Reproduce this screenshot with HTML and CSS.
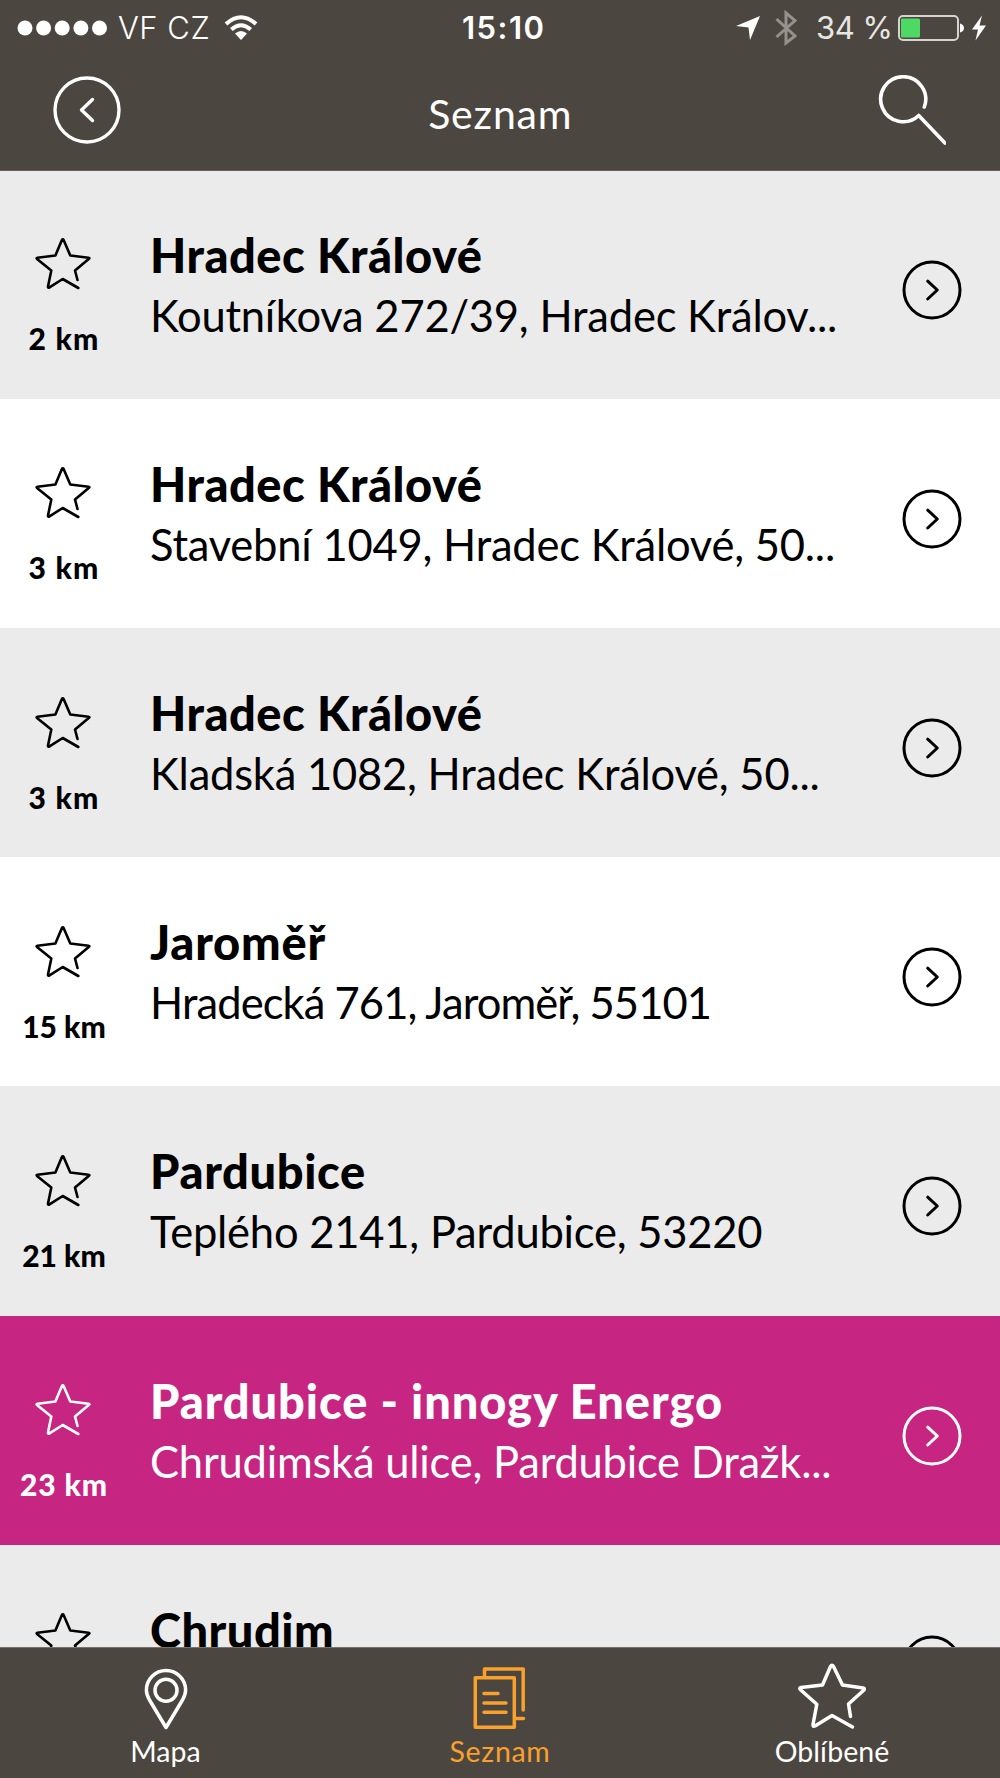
FILE: index.html
```html
<!DOCTYPE html>
<html lang="cs">
<head>
<meta charset="utf-8">
<title>Seznam</title>
<link rel="stylesheet" href="styles.css">
</head>
<body>
<svg class="defs" aria-hidden="true">
  <symbol id="star" viewBox="0 0 56 56"><path d="M42.500 44 40 34.500 54 22.700Q55 22 53.500 21.700L35.300 19.500 28.600 4Q27.700 2.500 26.900 4L20.400 19.500 2.500 21.700Q1 22 2 22.900L16.300 34.500 13 50.500Q12.900 52.500 14.500 51.400L27.700 43 43.300 52"/></symbol>
  <symbol id="go" viewBox="0 0 64 64"><circle cx="32" cy="32" r="28"/><path d="M27.700 23.200 37.300 32 27.700 41"/></symbol>
</svg>
<div class="screen">
  <header class="header">
    <div class="status">
      <svg class="dots" viewBox="0 0 92 16"><circle cx="8" cy="8" r="7.500"/><circle cx="26.600" cy="8" r="7.500"/><circle cx="45.200" cy="8" r="7.500"/><circle cx="63.900" cy="8" r="7.500"/><circle cx="82.500" cy="8" r="7.500"/></svg>
      <span class="carrier">VF CZ</span>
      <svg class="wifi" viewBox="0 0 34 26"><path class="line" d="M2 9Q17-4.500 32 9M7.300 14.500Q17 6 26.700 14.500"/><path d="M11 18.500Q17 13.500 23 18.500L17 25Z"/></svg>
      <span class="time">15:10</span>
      <svg class="arrow" viewBox="0 0 26 26"><path d="M25 1 15 25 13.500 12.500 1 11Z"/></svg>
      <svg class="bluetooth" viewBox="0 0 22 36"><path d="M1.500 9 20 26 11 33V3L20 10.500 1.500 27"/></svg>
      <span class="percent">34 %</span>
      <svg class="battery" viewBox="0 0 92 28"><rect class="shell" x="2" y="2" width="59" height="24" rx="4"/><rect class="charge" x="4" y="4.500" width="19" height="19" rx="1.500"/><path d="M63 9.500Q67 10.500 67 14T63 18.500Z"/><path d="M85 1.500 75 15.500H81L78.500 26.500 89 11.500H82.500Z"/></svg>
    </div>
    <nav class="navbar">
      <svg class="back" viewBox="0 0 70 70"><circle cx="35" cy="35" r="32"/><path d="M40.500 24.500 29.500 35 40.500 45.500"/></svg>
      <h1 class="heading">Seznam</h1>
      <svg class="search" viewBox="0 0 70 70"><path d="M48.300 32A22.500 22.500 0 1 0 42.700 40.500L69 68"/></svg>
    </nav>
  </header>

  <main class="list">
    <article class="row">
      <div class="side"><svg class="star"><use href="#star"/></svg><span class="distance near">2 km</span></div>
      <div class="info"><h2 class="name">Hradec Králové</h2><p class="address">Koutníkova 272/39, Hradec Králov...</p></div>
      <svg class="go"><use href="#go"/></svg>
    </article>
    <article class="row">
      <div class="side"><svg class="star"><use href="#star"/></svg><span class="distance near">3 km</span></div>
      <div class="info"><h2 class="name">Hradec Králové</h2><p class="address">Stavební 1049, Hradec Králové, 50...</p></div>
      <svg class="go"><use href="#go"/></svg>
    </article>
    <article class="row">
      <div class="side"><svg class="star"><use href="#star"/></svg><span class="distance near">3 km</span></div>
      <div class="info"><h2 class="name">Hradec Králové</h2><p class="address">Kladská 1082, Hradec Králové, 50...</p></div>
      <svg class="go"><use href="#go"/></svg>
    </article>
    <article class="row jaromer">
      <div class="side"><svg class="star"><use href="#star"/></svg><span class="distance">15 km</span></div>
      <div class="info"><h2 class="name">Jaroměř</h2><p class="address">Hradecká 761, Jaroměř, 55101</p></div>
      <svg class="go"><use href="#go"/></svg>
    </article>
    <article class="row pardubice">
      <div class="side"><svg class="star"><use href="#star"/></svg><span class="distance">21 km</span></div>
      <div class="info"><h2 class="name">Pardubice</h2><p class="address">Teplého 2141, Pardubice, 53220</p></div>
      <svg class="go"><use href="#go"/></svg>
    </article>
    <article class="row featured">
      <div class="side"><svg class="star"><use href="#star"/></svg><span class="distance">23 km</span></div>
      <div class="info"><h2 class="name">Pardubice - innogy Energo</h2><p class="address">Chrudimská ulice, Pardubice Dražk...</p></div>
      <svg class="go"><use href="#go"/></svg>
    </article>
    <article class="row">
      <div class="side"><svg class="star"><use href="#star"/></svg></div>
      <div class="info"><h2 class="name">Chrudim</h2></div>
      <svg class="go"><use href="#go"/></svg>
    </article>
  </main>

  <footer class="tabs">
    <a class="tab">
      <svg viewBox="0 0 70 70"><path d="M35 66.500 18.500 39Q15.400 33.500 15.400 29.200A19.600 19.600 0 0 1 54.600 29.200Q54.600 33.500 51.500 39Z"/><circle cx="35" cy="29.300" r="11"/></svg>
      <span>Mapa</span>
    </a>
    <a class="tab active">
      <svg viewBox="0 0 70 70"><path d="M10.300 16.700H49.300V66.300H10.300ZM19.500 16V8H58.200V49M50 57.500H58.500M19 32.500H33M19 42H41M19 51.300H41"/></svg>
      <span>Seznam</span>
    </a>
    <a class="tab">
      <svg viewBox="0 0 70 70"><path d="M53.500 55.500 51.500 43 67 29Q68 27.300 66 27L45.500 24 36.500 5.500Q35 3 33.500 5.500L25.500 24 4 26.500Q1.800 27 3.500 28.700L19.800 43.300 16 63.500Q15.700 66 18 65L35 54.500 55.500 66"/></svg>
      <span>Oblíbené</span>
    </a>
  </footer>
</div>
</body>
</html>
```
FILE: styles.css
```css
* { box-sizing: border-box; }
body { margin: 0; background: #fff; font-family: Lato, sans-serif; color: #000; }
h1, h2, p { margin: 0; font-weight: 400; }
svg { display: block; flex: none; fill: none; stroke: currentColor; stroke-linecap: round; stroke-linejoin: round; }
.defs { display: none; }
.screen { width: 1000px; height: 1778px; overflow: hidden; display: flex; flex-direction: column; }

.header { flex: none; height: 171px; background: #4c4640; border-bottom: 1px solid #655e5a; color: #fff; z-index: 1; }
.status { height: 55px; display: flex; align-items: center; padding-left: 17px; font-family: Inter, sans-serif; font-size: 31px; white-space: pre; }
.status svg { fill: currentColor; stroke: none; }
.dots { width: 92px; height: 16px; }
.carrier { width: 98px; margin-left: 9px; font-weight: 300; letter-spacing: .5px; }
.wifi { width: 34px; height: 26px; margin-left: 8px; }
.status .wifi .line { fill: none; stroke: #fff; stroke-width: 4; stroke-linecap: butt; }
.time { width: 92px; margin-left: 204px; font-weight: 600; letter-spacing: 1.500px; }
.arrow { width: 26px; height: 26px; margin-left: 181px; }
.status .bluetooth { width: 22px; height: 36px; margin-left: 14px; fill: none; stroke: #96918d; stroke-width: 3; stroke-linejoin: miter; stroke-linecap: butt; }
.percent { width: 80px; margin-left: 19px; letter-spacing: -.5px; color: #e8e6e4; }
.battery { width: 92px; height: 28px; margin-left: 1px; }
.battery .shell { fill: none; stroke: #d8d2d0; stroke-width: 2; }
.battery .charge { fill: #4cd964; }
.navbar { height: 115px; display: flex; align-items: flex-start; justify-content: space-between; padding: 19.500px 53.500px 0 52px; }
.back { width: 70px; height: 70px; stroke-width: 3.400; }
.search { width: 70px; height: 70px; stroke-width: 3.600; margin-top: .5px; }
.heading { margin: 9px 0 0 2px; font-size: 41px; line-height: 60px; letter-spacing: .8px; }

.list { flex: 1; min-height: 0; overflow: hidden; margin-top: -1.200px; }
.row { height: 229.170px; display: flex; align-items: flex-start; background: #ebebeb; }
.row:nth-child(2), .row:nth-child(4) { background: #fff; }
.row.featured { background: #c72582; color: #fff; }
.side { width: 126px; padding-top: 66.500px; display: flex; flex-direction: column; align-items: center; gap: 28px; }
.star { width: 56px; height: 56px; stroke-width: 2.600; }
.distance { padding-left: 2px; font-size: 30px; font-weight: 900; line-height: 36px; }
.distance.near { letter-spacing: 1.200px; }
.info { width: 774px; padding: 55px 0 0 24px; white-space: nowrap; }
.name { font-size: 47px; line-height: 60px; font-weight: 900; letter-spacing: .5px; }
.address { font-size: 43.500px; line-height: 60px; letter-spacing: -.22px; }
.jaromer .name { letter-spacing: .8px; }
.jaromer .address { letter-spacing: -.93px; }
.pardubice .name { letter-spacing: .65px; }
.featured .name { letter-spacing: .92px; }
.featured .distance { letter-spacing: .9px; }
.go { width: 64px; height: 64px; margin-top: 88px; stroke-width: 3; }

.tabs { flex: none; height: 131px; display: grid; grid-template-columns: 331px 338px 326px; background: #4c4640; border-top: 1px solid #77726e; color: #fff; z-index: 1; }
.tab { display: flex; flex-direction: column; align-items: center; padding-top: 13px; font-size: 28.500px; line-height: 36px; }
.tab svg { width: 70px; height: 70px; stroke-width: 3.500; }
.tab span { margin-top: 2px; }
.tab.active { color: #f9a12c; letter-spacing: .7px; }
```
